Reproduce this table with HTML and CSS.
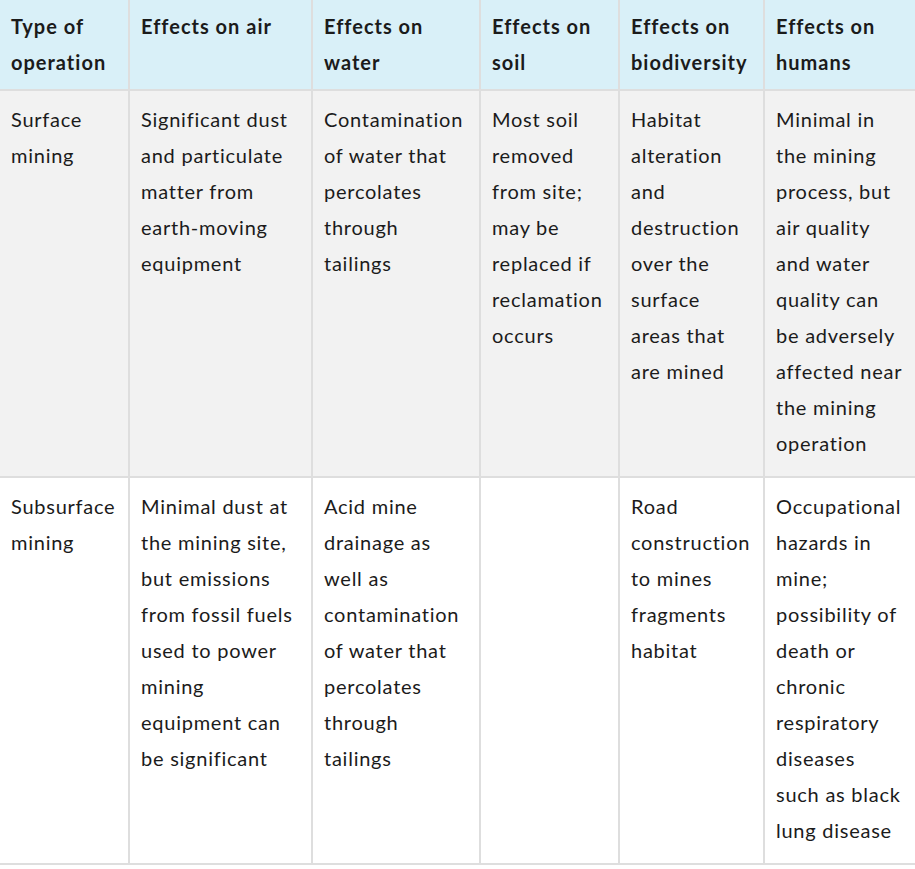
FILE: index.html
```html
<!DOCTYPE html>
<html lang="en">
<head>
<meta charset="utf-8">
<title>Mining effects</title>
<link rel="stylesheet" href="styles.css">
</head>
<body>
<table class="data">
  <colgroup>
    <col class="c1"><col class="c2"><col class="c3"><col class="c4"><col class="c5"><col class="c6">
  </colgroup>
  <thead>
    <tr>
      <th>Type of operation</th>
      <th>Effects on air</th>
      <th class="w3">Effects on water</th>
      <th>Effects on soil</th>
      <th class="w5">Effects on biodiversity</th>
      <th class="w6">Effects on humans</th>
    </tr>
  </thead>
  <tbody>
    <tr class="alt">
      <td>Surface mining</td>
      <td>Significant dust and particulate matter from earth-moving equipment</td>
      <td class="w3">Contamination of water that percolates through tailings</td>
      <td>Most soil removed from site; may be replaced if reclamation occurs</td>
      <td class="w5">Habitat alteration and destruction over the surface areas that are mined</td>
      <td class="w6">Minimal in the mining process, but air quality and water quality can be adversely affected near the mining operation</td>
    </tr>
    <tr>
      <td>Subsurface mining</td>
      <td>Minimal dust at the mining site, but emissions from fossil fuels used to power mining equipment can be significant</td>
      <td class="w3">Acid mine drainage as well as contamination of water that percolates through tailings</td>
      <td></td>
      <td class="w5">Road construction to mines fragments habitat</td>
      <td class="w6">Occupational hazards in mine; possibility of death or chronic respiratory diseases such as black lung disease</td>
    </tr>
  </tbody>
</table>
</body>
</html>
```

FILE: styles.css
```css
html, body {
  margin: 0;
  padding: 0;
  background: #ffffff;
}
body {
  width: 915px;
  overflow: hidden;
  font-family: Lato, "Liberation Sans", sans-serif;
  color: #1b1b1b;
}
.data {
  border-collapse: collapse;
  table-layout: fixed;
  width: 917px;
  font-size: 20px;
  line-height: 36px;
  letter-spacing: 0.75px;
}
.c1 { width: 129px; }
.c2 { width: 183px; }
.c3 { width: 168px; }
.c4 { width: 139px; }
.c5 { width: 145px; }
.c6 { width: 153px; }
.data th,
.data td {
  text-align: left;
  vertical-align: top;
  border: 2px solid #dedede;
  padding: 10px 2px 15px 11px;
}
.data .w3 { padding-right: 12px; }
.data .w5 { padding-right: 11.5px; }
.data .w6 { padding-right: 13.5px; }
.data tr > :first-child { border-left: none; }
.data thead tr > * { border-top: none; }
.data th {
  font-weight: 700;
  letter-spacing: 1px;
  background: #d9f0f8;
  padding-top: 8px;
  padding-bottom: 9px;
}
.data tr.alt td {
  background: #f2f2f2;
}
```
